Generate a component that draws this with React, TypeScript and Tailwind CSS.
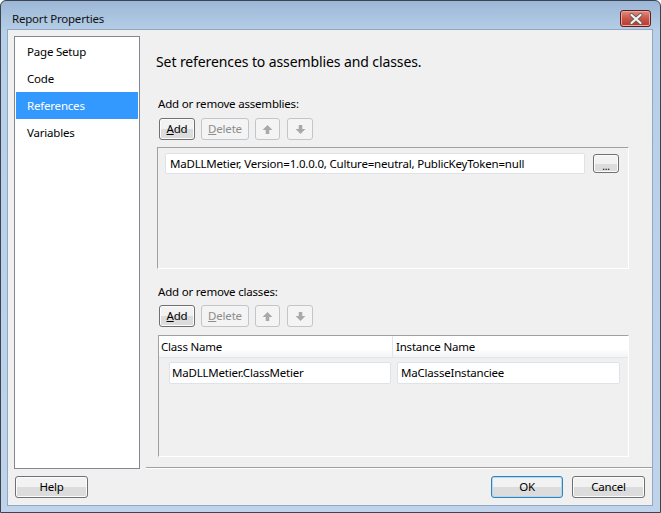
import React from 'react';

const font = { fontFamily: '"Noto Sans", "Open Sans", sans-serif' };

function UpArrow({ down = false }: { down?: boolean }) {
  return (
    <svg width="11" height="11" viewBox="0 0 10 10" className={down ? 'rotate-180' : ''}>
      <path d="M5 1 L9.5 5.5 L6.6 5.5 L6.6 9 L3.4 9 L3.4 5.5 L0.5 5.5 Z" fill="#a9a9a9" />
    </svg>
  );
}

function WinButton({
  children,
  className = '',
  disabled = false,
  focused = false,
}: {
  children: React.ReactNode;
  className?: string;
  disabled?: boolean;
  focused?: boolean;
}) {
  if (disabled) {
    return (
      <div
        className={`flex items-center justify-center rounded-[3px] border border-[#c3c6c9] bg-[#f4f4f4] text-[#8d8d8d] ${className}`}
      >
        {children}
      </div>
    );
  }
  return (
    <div
      className={`flex items-center justify-center rounded-[3px] border ${
        focused ? 'border-[#3c7fb1] shadow-[inset_0_0_0_1px_#a6dcf8]' : 'border-[#707070] shadow-[inset_0_0_0_1px_#fcfcfc]'
      } bg-gradient-to-b from-[#f2f2f2] from-50% to-[#dcdcdc] to-50% text-black ${className}`}
    >
      {children}
    </div>
  );
}

function ToolRow() {
  return (
    <div className="flex h-[22px] items-stretch">
      <WinButton className="w-[36px] border-[#5c5c5c]">
        <span>
          <span className="underline">A</span>dd
        </span>
      </WinButton>
      <WinButton disabled className="ml-[6px] w-[48px]">
        <span>
          <span className="underline">D</span>elete
        </span>
      </WinButton>
      <WinButton disabled className="ml-[6px] w-[25px]">
        <UpArrow />
      </WinButton>
      <WinButton disabled className="ml-[7px] w-[26px]">
        <UpArrow down />
      </WinButton>
    </div>
  );
}

function TextBox({ value, className = '' }: { value: string; className?: string }) {
  return (
    <div className={`flex items-center rounded-[2px] border border-[#dfe3e8] bg-white text-black ${className}`}>
      {value}
    </div>
  );
}

const navItems = ['Page Setup', 'Code', 'References', 'Variables'];

export default function App() {
  return (
    <div className="h-[513px] w-[661px] bg-white" style={font}>
      <div className="flex h-[513px] w-[661px] flex-col rounded-t-[6px] border border-[#3b4450] bg-gradient-to-b from-[#9cb7d6] from-0% via-[#b7cfe8] via-[6%] to-[#bfd4eb] text-[11.5px] leading-[16px] tracking-[-0.2px]">
        {/* title bar */}
        <div className="flex h-[29px] shrink-0 items-start">
          <div className="ml-[11px] mt-[10px] text-[11.5px] leading-[16px] text-[#111]">Report Properties</div>
          <div className="ml-auto mr-[9px] mt-[9px] flex h-[17px] w-[31px] items-center justify-center rounded-[3px] border border-[#5e1e1e] bg-gradient-to-b from-[#e08d7f] from-0% via-[#c8564a] via-50% to-[#b8382b] shadow-[inset_0_0_0_1px_#eaa79c]">
            <svg width="16" height="12" viewBox="0 0 16 12">
              <path d="M3.5 2 L12.5 10 M12.5 2 L3.5 10" stroke="#6a5a5a" strokeWidth="3.8" strokeLinecap="round" />
              <path d="M3.5 2 L12.5 10 M12.5 2 L3.5 10" stroke="#f4f4f4" strokeWidth="2.2" strokeLinecap="round" />
            </svg>
          </div>
        </div>

        {/* client area */}
        <div className="ml-[7px] flex h-[475px] w-[644px] flex-col bg-[#f0f0f0] shadow-[0_0_0_1px_#90a8c2]">
          <div className="flex h-[439px] items-start">
            {/* navigation */}
            <div className="ml-[6px] mt-[6px] h-[433px] w-[126px] shrink-0 border border-[#828790] bg-white p-[1px]">
              {navItems.map((item) => (
                <div
                  key={item}
                  className={`flex h-[27px] items-center pl-[11px] ${
                    item === 'References' ? 'bg-[#3399ff] text-white' : 'text-black'
                  }`}
                >
                  {item}
                </div>
              ))}
            </div>

            {/* main panel */}
            <div className="ml-[6px] h-[438px] w-[506px] shrink-0 border-b border-[#a0a0a0] shadow-[0_1px_0_#ffffff]">
              <div className="ml-[10px] mt-[22px] h-[20px] text-[14px] leading-[20px] tracking-[-0.1px] text-black">
                Set references to assemblies and classes.
              </div>

              <div className="ml-[12px] mt-[24px] h-[16px] text-black">Add or remove assemblies:</div>
              <div className="ml-[13px] mt-[6px]">
                <ToolRow />
              </div>
              <div className="ml-[11px] mt-[7px] h-[122px] w-[472px] border border-t-[#a0a0a0] border-l-[#a0a0a0] border-b-white border-r-white pl-[7px] pt-[5px]">
                <div className="flex items-center">
                  <TextBox
                    value="MaDLLMetier, Version=1.0.0.0, Culture=neutral, PublicKeyToken=null"
                    className="h-[21px] w-[420px] pl-[4px]"
                  />
                  <WinButton className="ml-[8px] h-[19px] w-[26px] text-[10px] leading-[10px]">
                    <span className="pt-[4px]">...</span>
                  </WinButton>
                </div>
              </div>

              <div className="ml-[12px] mt-[15px] h-[16px] text-black">Add or remove classes:</div>
              <div className="ml-[13px] mt-[5px]">
                <ToolRow />
              </div>
              <div className="ml-[12px] mt-[8px] h-[122px] w-[471px] border border-t-[#a0a0a0] border-l-[#a0a0a0] border-b-white border-r-white">
                <div className="flex h-[22px] border-b border-[#e5e5e5] bg-gradient-to-b from-white from-60% to-[#f3f4f6] text-black">
                  <div className="flex w-[234px] items-center border-r border-[#e5e5e5] pl-[2px]">Class Name</div>
                  <div className="flex items-center pl-[3px]">Instance Name</div>
                </div>
                <div className="flex pt-[4px]">
                  <TextBox value="MaDLLMetier.ClassMetier" className="ml-[10px] h-[22px] w-[222px] pl-[2px]" />
                  <TextBox value="MaClasseInstanciee" className="ml-[6px] h-[22px] w-[223px] pl-[3px]" />
                </div>
              </div>
            </div>
          </div>

          {/* bottom buttons */}
          <div className="mt-[7px] flex h-[22px] px-[7px]">
            <WinButton className="w-[73px]">Help</WinButton>
            <WinButton focused className="ml-auto w-[72px]">
              OK
            </WinButton>
            <WinButton className="ml-[9px] w-[73px]">Cancel</WinButton>
          </div>
        </div>
      </div>
    </div>
  );
}
